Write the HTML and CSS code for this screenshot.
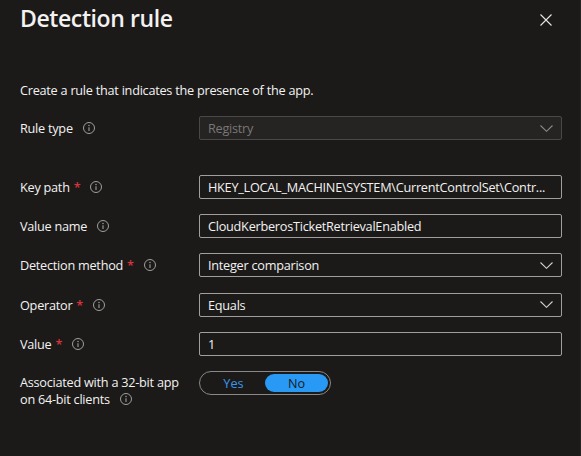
FILE: index.html
```html
<!DOCTYPE html>
<html lang="en">
<head>
<meta charset="utf-8">
<title>Detection rule</title>
<link rel="stylesheet" href="styles.css">
</head>
<body>
<div class="panel">
  <header class="head">
    <h1 class="title">Detection rule</h1>
    <button class="close" aria-label="Close">
      <svg width="12" height="12" viewBox="0 0 12 12"><path d="M0.5 0.5 L11.5 11.5 M11.5 0.5 L0.5 11.5" stroke="#e8e6e3" stroke-width="1.1" fill="none"/></svg>
    </button>
  </header>
  <p class="desc">Create a rule that indicates the presence of the app.</p>

  <div class="form">
    <div class="row first">
      <div class="label"><span>Rule type</span><svg class="info" width="12" height="12" viewBox="0 0 12 12"><circle cx="6" cy="6" r="5.5" fill="none" stroke="currentColor"/><path d="M6 5.2 V9" stroke="currentColor" stroke-width="1.1"/><circle cx="6" cy="3.5" r="0.75" fill="currentColor"/></svg></div>
      <div class="field select disabled"><span>Registry</span><svg class="chev" width="13" height="7" viewBox="0 0 13 7"><path d="M0.5 0.5 L6.5 6.3 L12.5 0.5" stroke="currentColor" stroke-width="1.1" fill="none"/></svg></div>
    </div>
    <div class="row spaced">
      <div class="label"><span>Key path</span><b class="req">*</b><svg class="info" width="12" height="12" viewBox="0 0 12 12"><circle cx="6" cy="6" r="5.5" fill="none" stroke="currentColor"/><path d="M6 5.2 V9" stroke="currentColor" stroke-width="1.1"/><circle cx="6" cy="3.5" r="0.75" fill="currentColor"/></svg></div>
      <div class="field"><span class="ellip">HKEY_LOCAL_MACHINE\SYSTEM\CurrentControlSet\Contr...</span></div>
    </div>
    <div class="row">
      <div class="label"><span>Value name</span><svg class="info" width="12" height="12" viewBox="0 0 12 12"><circle cx="6" cy="6" r="5.5" fill="none" stroke="currentColor"/><path d="M6 5.2 V9" stroke="currentColor" stroke-width="1.1"/><circle cx="6" cy="3.5" r="0.75" fill="currentColor"/></svg></div>
      <div class="field"><span>CloudKerberosTicketRetrievalEnabled</span></div>
    </div>
    <div class="row">
      <div class="label"><span>Detection method</span><b class="req">*</b><svg class="info" width="12" height="12" viewBox="0 0 12 12"><circle cx="6" cy="6" r="5.5" fill="none" stroke="currentColor"/><path d="M6 5.2 V9" stroke="currentColor" stroke-width="1.1"/><circle cx="6" cy="3.5" r="0.75" fill="currentColor"/></svg></div>
      <div class="field select"><span>Integer comparison</span><svg class="chev" width="13" height="7" viewBox="0 0 13 7"><path d="M0.5 0.5 L6.5 6.3 L12.5 0.5" stroke="currentColor" stroke-width="1.1" fill="none"/></svg></div>
    </div>
    <div class="row">
      <div class="label"><span>Operator</span><b class="req">*</b><svg class="info" width="12" height="12" viewBox="0 0 12 12"><circle cx="6" cy="6" r="5.5" fill="none" stroke="currentColor"/><path d="M6 5.2 V9" stroke="currentColor" stroke-width="1.1"/><circle cx="6" cy="3.5" r="0.75" fill="currentColor"/></svg></div>
      <div class="field select"><span>Equals</span><svg class="chev" width="13" height="7" viewBox="0 0 13 7"><path d="M0.5 0.5 L6.5 6.3 L12.5 0.5" stroke="currentColor" stroke-width="1.1" fill="none"/></svg></div>
    </div>
    <div class="row">
      <div class="label"><span>Value</span><b class="req">*</b><svg class="info" width="12" height="12" viewBox="0 0 12 12"><circle cx="6" cy="6" r="5.5" fill="none" stroke="currentColor"/><path d="M6 5.2 V9" stroke="currentColor" stroke-width="1.1"/><circle cx="6" cy="3.5" r="0.75" fill="currentColor"/></svg></div>
      <div class="field"><span>1</span></div>
    </div>
    <div class="row last">
      <div class="label multi"><span>Associated with a 32-bit app</span><span class="line2"><span>on 64-bit clients</span><svg class="info" width="12" height="12" viewBox="0 0 12 12"><circle cx="6" cy="6" r="5.5" fill="none" stroke="currentColor"/><path d="M6 5.2 V9" stroke="currentColor" stroke-width="1.1"/><circle cx="6" cy="3.5" r="0.75" fill="currentColor"/></svg></span></div>
      <div class="toggle">
        <span class="opt">Yes</span>
        <span class="opt on">No</span>
      </div>
    </div>
  </div>
</div>
</body>
</html>
```
FILE: styles.css
```css
* { box-sizing: border-box; }
html, body { margin: 0; padding: 0; }
body {
  background: #1b1a19;
  color: #f3f2f1;
  font-family: "Open Sans", "Noto Sans", "DejaVu Sans", sans-serif;
  font-size: 12.7px;
  width: 581px;
  height: 456px;
  overflow: hidden;
}
.panel {
  padding: 0 18px 0 20px;
  border-right: 1px solid #252423;
  height: 456px;
}
.head {
  display: flex;
  justify-content: space-between;
  align-items: flex-start;
  height: 80px;
}
.title {
  margin: 2px 0 0 0;
  font-size: 23px;
  font-weight: 600;
  line-height: 32px;
  letter-spacing: -0.4px;
}
.close {
  background: none;
  border: 0;
  padding: 0;
  margin: 14px 10px 0 0;
  width: 12px;
  height: 12px;
  display: flex;
}
.desc {
  margin: 0;
  line-height: 20px;
  height: 36px;
  letter-spacing: -0.25px;
}
.form {
  display: flex;
  flex-direction: column;
}
.row {
  display: grid;
  grid-template-columns: 179px 1fr;
  align-items: center;
  margin-top: 15.2px;
}
.row.first { margin-top: 0; }
.row.spaced { margin-top: 35px; }
.row.last { align-items: start; margin-top: 15px; }
.label {
  display: flex;
  align-items: center;
  letter-spacing: -0.25px;
}
.label.multi {
  flex-direction: column;
  align-items: flex-start;
  line-height: 17px;
  padding-top: 3px;
}
.line2 { display: flex; align-items: center; }
.req {
  color: #d6333d;
  font-weight: 600;
  margin-left: 4px;
}
.info {
  color: #a19f9d;
  margin-left: 10px;
  flex: none;
}
.line2 .info { margin-left: 10px; }
.field {
  height: 24px;
  border: 1px solid #a19f9d;
  border-radius: 2px;
  display: flex;
  align-items: center;
  justify-content: space-between;
  padding: 0 8px;
  overflow: hidden;
  white-space: nowrap;
  letter-spacing: -0.25px;
}
.ellip { overflow: hidden; text-overflow: ellipsis; }
.field.disabled {
  border-color: #4a4846;
  background: #252423;
  color: #797775;
}
.chev { color: #d2d0ce; flex: none; }
.disabled .chev { color: #8a8886; }
.toggle {
  width: 132px;
  height: 24px;
  border: 1px solid #8a8886;
  border-radius: 12px;
  display: grid;
  grid-template-columns: 1fr 1fr;
  padding: 2px;
}
.opt {
  display: flex;
  align-items: center;
  justify-content: center;
  color: #3a96ed;
  border-radius: 10px;
}
.opt.on {
  background: #2899f5;
  color: #1b1a19;
}
```
